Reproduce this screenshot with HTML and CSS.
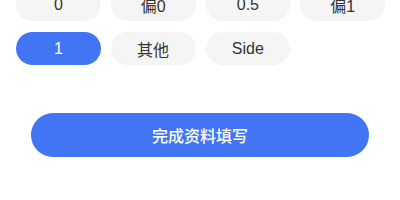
FILE: index.html
```html
<!DOCTYPE html>
<html lang="zh-CN">
<head>
    <meta charset="UTF-8">
    <meta name="viewport" content="width=device-width, initial-scale=1.0">
    <title>完成资料填写</title>
    <link rel="stylesheet" href="styles.css">
</head>
<body>
    <div class="page">
        <!-- Options -->
        <div class="options">
            <div class="option">0</div>
            <div class="option">偏0</div>
            <div class="option">0.5</div>
            <div class="option">偏1</div>
            <div class="option active">1</div>
            <div class="option">其他</div>
            <div class="option">Side</div>
        </div>

        <!-- Submit -->
        <button class="submit">完成资料填写</button>
    </div>
</body>
</html>
```

FILE: styles.css
```css
* {
    margin: 0;
    padding: 0;
    box-sizing: border-box;
}

body {
    font-family: "Liberation Sans", "Noto Sans CJK SC", sans-serif;
    background-color: #ffffff;
    width: 400px;
    height: 200px;
    overflow: hidden;
}

.page {
    display: flex;
    flex-direction: column;
    margin-top: -12px;
}

.options {
    display: grid;
    grid-template-columns: repeat(4, 1fr);
    column-gap: 10px;
    row-gap: 11px;
    padding: 0 15px 0 16px;
}

.option {
    height: 33px;
    border-radius: 17px;
    background-color: #f5f5f5;
    color: #333;
    font-size: 16px;
    display: flex;
    align-items: center;
    justify-content: center;
}

.option.active {
    background-color: #4275f3;
    color: #fff;
}

.submit {
    margin: 48px 31px 0;
    height: 44px;
    border: none;
    border-radius: 22px;
    background-color: #4275f3;
    color: #fff;
    font-family: "Noto Sans CJK SC", sans-serif;
    font-size: 16px;
    font-weight: 500;
}
```
